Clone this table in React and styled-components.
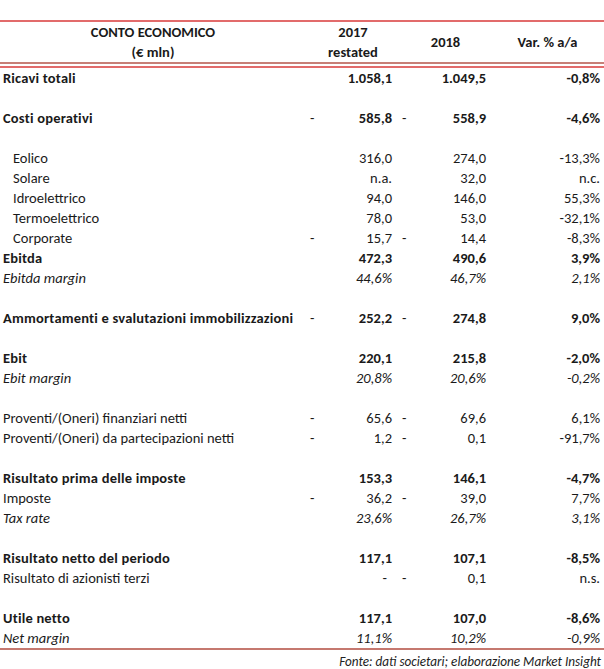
import React from 'react';
import styled, { createGlobalStyle } from 'styled-components';

const GlobalStyle = createGlobalStyle`
  html, body {
    margin: 0;
    padding: 0;
    background: #ffffff;
  }
  body {
    font-family: 'Carlito', 'Lato', 'Liberation Sans', sans-serif;
    color: #1a1a1a;
  }
`;

const COLS = '306px 94px 91px 113px';

const Page = styled.div`
  width: 604px;
  padding-top: 20px;
  font-size: 14.5px;
`;

const Header = styled.div`
  display: grid;
  grid-template-columns: ${COLS};
  grid-template-rows: 20px 20px;
  border-top: 2px solid #e26b6b;
  font-weight: 700;
`;

const HeadCell = styled.div`
  display: flex;
  align-items: center;
  justify-content: center;
  grid-row: ${(p) => p.$span ? '1 / 3' : 'auto'};
  grid-column: ${(p) => p.$col};
`;

const DoubleRule = styled.div`
  height: 2px;
  border-top: 2px solid #c77f77;
  border-bottom: 2px solid #e26b6b;
`;

const Row = styled.div`
  display: grid;
  grid-template-columns: ${COLS};
  height: 20px;
  align-items: center;
  font-weight: ${(p) => (p.$kind === 'bold' ? 700 : 400)};
  font-style: ${(p) => (p.$kind === 'italic' ? 'italic' : 'normal')};
  white-space: nowrap;
`;

const Label = styled.div`
  padding-left: ${(p) => (p.$indent ? 13 : 3)}px;
  letter-spacing: ${(p) => (p.$bold ? '0.2px' : '0')};
`;

const NumCell = styled.div`
  display: flex;
  justify-content: space-between;
  padding-left: ${(p) => p.$padL}px;
  padding-right: ${(p) => p.$padR}px;
`;

const Dash = styled.span`
  font-weight: 400;
  font-style: normal;
`;

const Value = styled.span`
  margin-left: auto;
  padding-right: ${(p) => (p.$zero ? 5 : 0)}px;
`;

const VarCell = styled.div`
  text-align: right;
  padding-right: 4px;
`;

const BottomRule = styled.div`
  height: 0;
  border-top: 2px solid #c5786f;
`;

const Source = styled.div`
  text-align: right;
  font-style: italic;
  font-size: 13.2px;
  padding: 3px 3px 0 0;
  color: #222;
`;

const rows = [
  { label: 'Ricavi totali', b: '1.058,1', c: '1.049,5', d: '-0,8%', kind: 'bold' },
  null,
  { label: 'Costi operativi', bd: true, b: '585,8', cd: true, c: '558,9', d: '-4,6%', kind: 'bold' },
  null,
  { label: 'Eolico', b: '316,0', c: '274,0', d: '-13,3%', indent: true },
  { label: 'Solare', b: 'n.a.', c: '32,0', d: 'n.c.', indent: true },
  { label: 'Idroelettrico', b: '94,0', c: '146,0', d: '55,3%', indent: true },
  { label: 'Termoelettrico', b: '78,0', c: '53,0', d: '-32,1%', indent: true },
  { label: 'Corporate', bd: true, b: '15,7', cd: true, c: '14,4', d: '-8,3%', indent: true },
  { label: 'Ebitda', b: '472,3', c: '490,6', d: '3,9%', kind: 'bold' },
  { label: 'Ebitda margin', b: '44,6%', c: '46,7%', d: '2,1%', kind: 'italic' },
  null,
  { label: 'Ammortamenti e svalutazioni immobilizzazioni', bd: true, b: '252,2', cd: true, c: '274,8', d: '9,0%', kind: 'bold' },
  null,
  { label: 'Ebit', b: '220,1', c: '215,8', d: '-2,0%', kind: 'bold' },
  { label: 'Ebit margin', b: '20,8%', c: '20,6%', d: '-0,2%', kind: 'italic' },
  null,
  { label: 'Proventi/(Oneri) finanziari netti', bd: true, b: '65,6', cd: true, c: '69,6', d: '6,1%' },
  { label: 'Proventi/(Oneri) da partecipazioni netti', bd: true, b: '1,2', cd: true, c: '0,1', d: '-91,7%' },
  null,
  { label: 'Risultato prima delle imposte', b: '153,3', c: '146,1', d: '-4,7%', kind: 'bold' },
  { label: 'Imposte', bd: true, b: '36,2', cd: true, c: '39,0', d: '7,7%' },
  { label: 'Tax rate', b: '23,6%', c: '26,7%', d: '3,1%', kind: 'italic' },
  null,
  { label: 'Risultato netto del periodo', b: '117,1', c: '107,1', d: '-8,5%', kind: 'bold' },
  { label: 'Risultato di azionisti terzi', b: '-', zero: true, cd: true, c: '0,1', d: 'n.s.' },
  null,
  { label: 'Utile netto', b: '117,1', c: '107,0', d: '-8,6%', kind: 'bold' },
  { label: 'Net margin', b: '11,1%', c: '10,2%', d: '-0,9%', kind: 'italic' },
];

const App = () => (
  <Page>
    <GlobalStyle />
    <Header>
      <HeadCell $col="1">CONTO ECONOMICO</HeadCell>
      <HeadCell $col="2">2017</HeadCell>
      <HeadCell $col="3" $span>2018</HeadCell>
      <HeadCell $col="4" $span>Var. % a/a</HeadCell>
      <HeadCell $col="1">(€ mln)</HeadCell>
      <HeadCell $col="2">restated</HeadCell>
    </Header>
    <DoubleRule />
    {rows.map((r, i) =>
      r ? (
        <Row key={i} $kind={r.kind}>
          <Label $indent={r.indent} $bold={r.kind === 'bold'}>{r.label}</Label>
          <NumCell $padL={4} $padR={8}>
            {r.bd && <Dash>-</Dash>}
            <Value $zero={r.zero}>{r.b}</Value>
          </NumCell>
          <NumCell $padL={2} $padR={5}>
            {r.cd && <Dash>-</Dash>}
            <Value>{r.c}</Value>
          </NumCell>
          <VarCell>{r.d}</VarCell>
        </Row>
      ) : (
        <Row key={i} />
      )
    )}
    <BottomRule />
    <Source>Fonte: dati societari; elaborazione Market Insight</Source>
  </Page>
);

export default App;
